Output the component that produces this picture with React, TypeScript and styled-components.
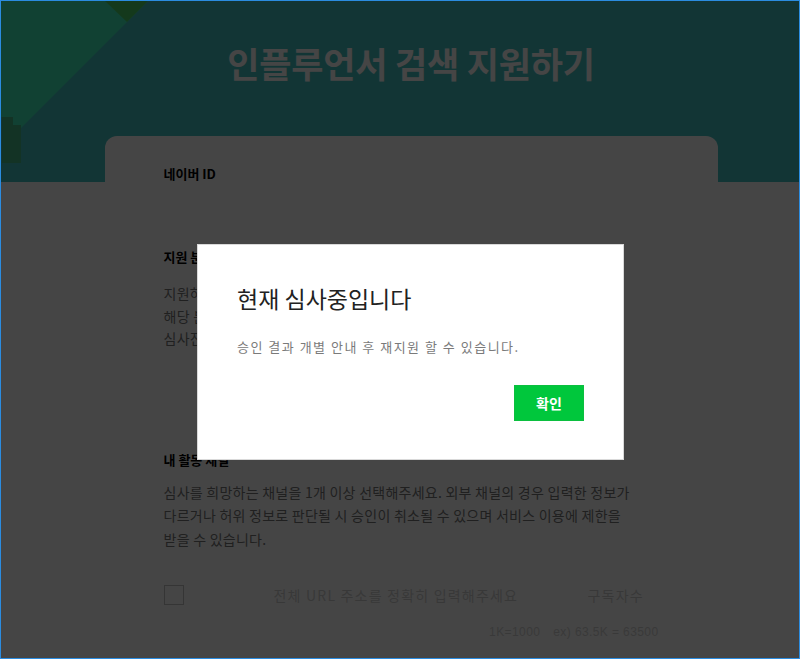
import styled, { createGlobalStyle } from "styled-components";

const GlobalStyle = createGlobalStyle`
  html, body {
    margin: 0;
    padding: 0;
    background: #fff;
  }
  body {
    font-family: "Noto Sans CJK KR", "Noto Sans", sans-serif;
  }
`;

const Frame = styled.div`
  position: relative;
  width: 800px;
  height: 659px;
  box-sizing: border-box;
  border: 1px solid #2b8ce0;
  overflow: hidden;
  background: #fff;
`;

const Page = styled.div`
  min-width: 820px;
`;

const Header = styled.header`
  position: relative;
  height: 181px;
  background: #44c4c4;
  display: flex;
  justify-content: center;
`;

const Decoration = styled.svg`
  position: absolute;
  left: 0;
  top: 0;
`;

const Title = styled.h1`
  position: relative;
  margin: 38px 0 0;
  font-size: 35px;
  line-height: 48px;
  font-weight: 700;
  color: #fff;
  letter-spacing: -0.2px;
`;

const Card = styled.main`
  position: relative;
  width: 613px;
  margin: -46px auto 0;
  box-sizing: border-box;
  padding: 28px 59px 40px;
  background: #fff;
  border-radius: 12px;
`;

const Label = styled.h3<{ $top?: number }>`
  margin: ${(p) => p.$top ?? 0}px 0 0;
  font-size: 13px;
  line-height: 20px;
  font-weight: 700;
  color: #000;
`;

const Desc = styled.p<{ $top: number; $lh: number }>`
  margin: ${(p) => p.$top}px 0 0;
  font-size: 14px;
  line-height: ${(p) => p.$lh}px;
  color: #777;
  letter-spacing: 0.25px;
`;

const ChannelRow = styled.div`
  display: flex;
  align-items: center;
  margin-top: 34px;
  height: 20px;
`;

const Check = styled.span`
  width: 20px;
  height: 20px;
  box-sizing: border-box;
  border: 1px solid #c4c4c4;
  background: #fff;
  flex: none;
`;

const Field = styled.input<{ $w?: number; $pad: number }>`
  flex: ${(p) => (p.$w ? "none" : "1")};
  width: ${(p) => (p.$w ? `${p.$w}px` : "auto")};
  min-width: 0;
  border: none;
  outline: none;
  background: transparent;
  padding: 0 0 0 ${(p) => p.$pad}px;
  font-family: "Noto Sans CJK KR", sans-serif;
  font-size: 14px;
  line-height: 20px;
  letter-spacing: 1.2px;
  color: #333;
  &::placeholder {
    color: #d0d0d0;
  }
`;

const Hint = styled.div`
  margin-top: 18px;
  display: flex;
  justify-content: flex-end;
  gap: 13px;
  font-family: "Liberation Sans", sans-serif;
  font-size: 12px;
  line-height: 18px;
  letter-spacing: 0.4px;
  color: #d4d4d4;
`;

const Overlay = styled.div`
  position: absolute;
  inset: 0;
  background: rgba(0, 0, 0, 0.73);
  display: flex;
  justify-content: center;
  align-items: flex-start;
  padding: 243px 0 0 21px;
`;

const Modal = styled.div`
  width: 427px;
  box-sizing: border-box;
  padding: 38px 39px 38px 39px;
  background: #fff;
  border: 1px solid #d9d9d9;
`;

const ModalTitle = styled.h2`
  margin: 0;
  font-size: 23px;
  line-height: 31px;
  font-weight: 400;
  color: #222;
`;

const ModalText = styled.p`
  margin: 24px 0 0;
  font-size: 13px;
  line-height: 18px;
  letter-spacing: 1.5px;
  color: #7a7a7a;
`;

const Actions = styled.div`
  display: flex;
  justify-content: flex-end;
  margin-top: 29px;
`;

const ConfirmButton = styled.button`
  width: 70px;
  height: 36px;
  border: 1px solid #0bbf3f;
  background: #00c73c;
  color: #fff;
  font-family: "Noto Sans CJK KR", sans-serif;
  font-size: 14px;
  font-weight: 700;
  cursor: pointer;
`;

export default function App() {
  return (
    <>
      <GlobalStyle />
      <Frame>
        <Page>
          <Header>
            <Decoration width="160" height="170" viewBox="0 0 160 170">
              <polygon
                points="0,0 147,0 20,127 20,124 12,124 12,116 0,116"
                fill="#40f0bc"
              />
              <polygon points="104,0 147,0 126,21" fill="#4cd46a" />
              <polygon
                points="1,116 12,116 12,124 20,124 20,162 1,162"
                fill="#46be8a"
              />
            </Decoration>
            <Title>인플루언서 검색 지원하기</Title>
          </Header>
          <Card>
            <Label>네이버 ID</Label>

            <Label $top={63}>지원 분야</Label>
            <Desc $top={15} $lh={22.5}>
              지원하실 분야를 선택해주세요.
              <br />
              해당 분야로 심사가 진행됩니다.
              <br />
              심사진행 중에는 변경할 수 없습니다.
            </Desc>

            <Label $top={100}>내 활동 채널</Label>
            <Desc $top={11} $lh={23.5}>
              심사를 희망하는 채널을 1개 이상 선택해주세요. 외부 채널의 경우 입력한 정보가
              <br />
              다르거나 허위 정보로 판단될 시 승인이 취소될 수 있으며 서비스 이용에 제한을
              <br />
              받을 수 있습니다.
            </Desc>

            <ChannelRow>
              <Check />
              <Field $pad={90} placeholder="전체 URL 주소를 정확히 입력해주세요" />
              <Field $w={71} $pad={16} placeholder="구독자수" />
            </ChannelRow>
            <Hint>
              <span>1K=1000</span>
              <span>ex) 63.5K = 63500</span>
            </Hint>
          </Card>
        </Page>

        <Overlay>
          <Modal>
            <ModalTitle>현재 심사중입니다</ModalTitle>
            <ModalText>승인 결과 개별 안내 후 재지원 할 수 있습니다.</ModalText>
            <Actions>
              <ConfirmButton>확인</ConfirmButton>
            </Actions>
          </Modal>
        </Overlay>
      </Frame>
    </>
  );
}
